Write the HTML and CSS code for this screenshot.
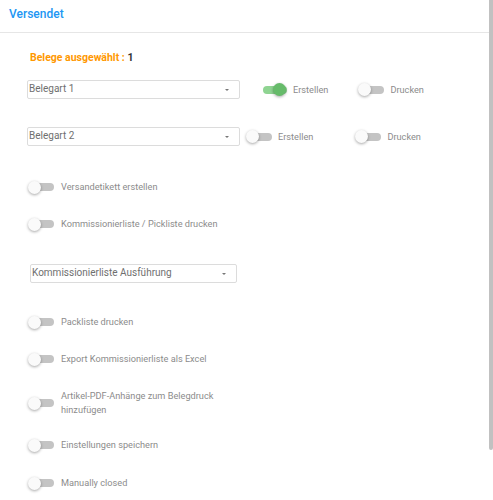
FILE: index.html
```html
<!DOCTYPE html>
<html lang="de">
<head>
    <meta charset="UTF-8">
    <meta name="viewport" content="width=device-width, initial-scale=1.0">
    <title>Versendet</title>
    <link rel="stylesheet" href="styles.css">
</head>
<body>

    <div class="frame">
    <div class="page">
        <!-- Kopfzeile -->
        <div class="header">Versendet</div>

        <div class="content">
            <div class="auswahl">Belege ausgewählt : <span class="anzahl">1</span></div>

            <!-- Belegarten -->
            <div class="beleg-row row-1">
                <div class="select"><span>Belegart 1</span><i class="pfeil"></i></div>
                <div class="toggle-item erstellen">
                    <span class="switch on"><span class="track"></span><span class="thumb"></span></span>
                    <span class="label">Erstellen</span>
                </div>
                <div class="toggle-item">
                    <span class="switch"><span class="track"></span><span class="thumb"></span></span>
                    <span class="label">Drucken</span>
                </div>
            </div>

            <div class="beleg-row row-2">
                <div class="select"><span>Belegart 2</span><i class="pfeil"></i></div>
                <div class="toggle-item erstellen">
                    <span class="switch"><span class="track"></span><span class="thumb"></span></span>
                    <span class="label">Erstellen</span>
                </div>
                <div class="toggle-item">
                    <span class="switch"><span class="track"></span><span class="thumb"></span></span>
                    <span class="label">Drucken</span>
                </div>
            </div>

            <!-- Optionen -->
            <div class="option first">
                <span class="switch"><span class="track"></span><span class="thumb"></span></span>
                <span class="label">Versandetikett erstellen</span>
            </div>
            <div class="option">
                <span class="switch"><span class="track"></span><span class="thumb"></span></span>
                <span class="label">Kommissionierliste / Pickliste drucken</span>
            </div>

            <div class="select ausfuehrung"><span>Kommissionierliste Ausführung</span><i class="pfeil"></i></div>

            <div class="option after-select">
                <span class="switch"><span class="track"></span><span class="thumb"></span></span>
                <span class="label">Packliste drucken</span>
            </div>
            <div class="option">
                <span class="switch"><span class="track"></span><span class="thumb"></span></span>
                <span class="label">Export Kommissionierliste als Excel</span>
            </div>
            <div class="option zweizeilig">
                <span class="switch"><span class="track"></span><span class="thumb"></span></span>
                <span class="label">Artikel-PDF-Anhänge zum Belegdruck<br>hinzufügen</span>
            </div>
            <div class="option weit">
                <span class="switch"><span class="track"></span><span class="thumb"></span></span>
                <span class="label">Einstellungen speichern</span>
            </div>
            <div class="option weit">
                <span class="switch"><span class="track"></span><span class="thumb"></span></span>
                <span class="label">Manually closed</span>
            </div>
        </div>
    </div>

    <!-- Scrollleiste -->
    <div class="scrollbar"><div class="scroll-thumb"></div></div>
    </div>

</body>
</html>
```

FILE: styles.css
```css
body {
    font-family: Roboto, 'Liberation Sans', sans-serif;
    background-color: #fff;
    margin: 0;
    padding: 0;
}

.frame {
    display: flex;
    height: 100vh;
    overflow: hidden;
}

.page {
    flex: 1;
    min-width: 0;
}

/* Scrollleiste */
.scrollbar {
    width: 4px;
    flex-shrink: 0;
    background: #fff;
}

.scroll-thumb {
    height: 450px;
    background: #c1c1c1;
    border-radius: 0 0 2px 2px;
}

/* Kopfzeile */
.header {
    height: 32px;
    line-height: 28px;
    padding-left: 9px;
    border-bottom: 1px solid #e6e6e6;
    color: #2196f3;
    font-size: 12px;
    font-weight: 500;
}

.content {
    padding: 17px 0 65px 27px;
}

.auswahl {
    margin-left: 3px;
    height: 14px;
    line-height: 16px;
    color: #ff9800;
    font-size: 10.5px;
    font-weight: bold;
}

.auswahl .anzahl {
    color: #333;
}

/* Auswahlfeld */
.select {
    position: relative;
    box-sizing: border-box;
    width: 213px;
    height: 19px;
    border: 1px solid #dcdcdc;
    border-radius: 2px;
    padding: 1px 0 0 1px;
    color: #6f6f6f;
    font-size: 10px;
    line-height: 13px;
    flex-shrink: 0;
}

.select .pfeil {
    position: absolute;
    right: 10px;
    top: 8px;
    border-left: 2px solid transparent;
    border-right: 2px solid transparent;
    border-top: 2px solid #777;
}

.select.ausfuehrung {
    width: 207px;
    margin: 30px 0 0 3px;
}

/* Zeilen mit Belegart */
.beleg-row {
    display: flex;
    align-items: center;
    height: 19px;
}

.row-1 {
    margin-top: 16px;
}

.row-1 .erstellen {
    margin-left: 21px;
    margin-right: 30px;
}

.row-2 {
    margin-top: 28px;
}

.row-2 .erstellen {
    margin-left: 6px;
    margin-right: 42px;
}

.toggle-item {
    display: flex;
    align-items: center;
    gap: 6px;
}

/* Schalter */
.switch {
    position: relative;
    display: inline-block;
    width: 26px;
    height: 14px;
    flex-shrink: 0;
}

.switch .track {
    position: absolute;
    left: 2px;
    right: 0;
    top: 3px;
    height: 8px;
    border-radius: 4px;
    background: #c4c4c4;
}

.switch .thumb {
    position: absolute;
    left: 0;
    top: 0.5px;
    width: 13px;
    height: 13px;
    border-radius: 50%;
    background: #fafafa;
    box-shadow: 0 1px 3px rgba(0, 0, 0, 0.35);
}

.switch.on .track {
    background: #8fd492;
}

.switch.on .thumb {
    left: 12px;
    background: #66bb6a;
}

.label {
    color: #8c8c8c;
    font-size: 9.2px;
    line-height: 14px;
}

/* Einzelne Optionen */
.option {
    display: flex;
    align-items: center;
    gap: 7px;
    height: 20px;
    margin-top: 17px;
    padding-left: 1px;
}

.option.first {
    margin-top: 31px;
}

.option.after-select {
    margin-top: 29px;
}

.option.zweizeilig {
    height: 28px;
    margin-top: 20px;
}

.option.weit {
    margin-top: 18px;
}
```
